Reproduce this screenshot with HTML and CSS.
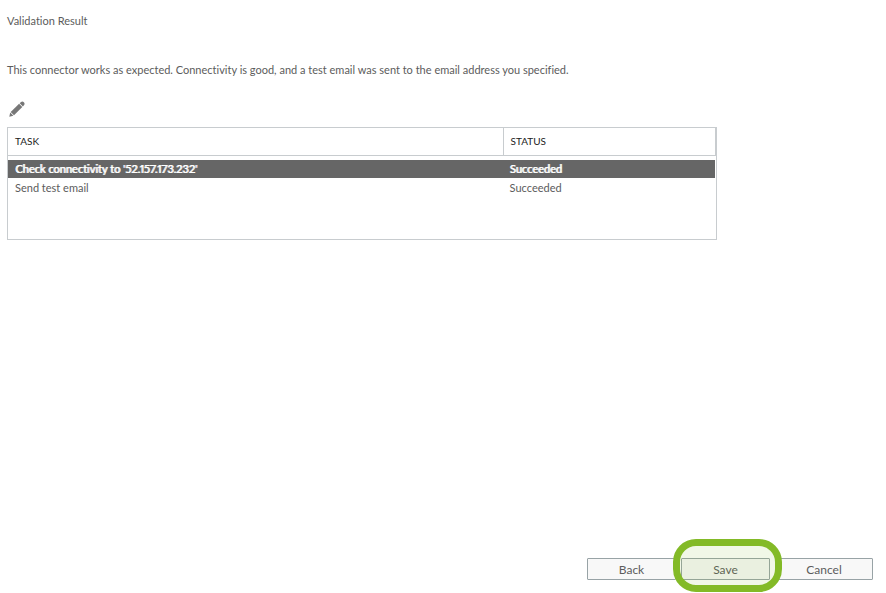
FILE: index.html
```html
<!DOCTYPE html>
<html lang="en">
<head>
    <meta charset="utf-8">
    <meta name="viewport" content="width=device-width, initial-scale=1.0">
    <title>Validation Result</title>
    <link rel="stylesheet" href="styles.css">
</head>
<body>

    <main class="content">
        <h1 class="title">Validation Result</h1>
        <p class="message">This connector works as expected. Connectivity is good, and a test email was sent to the email address you specified.</p>

        <button type="button" class="edit" aria-label="Edit">
            <svg width="16" height="16" viewBox="0 0 16 16" fill="#777">
                <path d="M0.3 15.7L1.2 11.6L4.4 14.8Z"/>
                <path d="M1.7 11L10.1 2.8L13.3 6L5 14.2Z"/>
                <path d="M10.7 2.2L12 1Q13.5 -0.1 14.9 1.2Q16.1 2.7 15.1 4.1L13.9 5.4Z"/>
            </svg>
        </button>

        <div class="grid">
            <table class="tasks">
                <thead>
                    <tr>
                        <th class="task">Task</th>
                        <th class="status">Status</th>
                    </tr>
                </thead>
                <tbody>
                    <tr class="spacer"><td colspan="2"></td></tr>
                    <tr class="selected">
                        <td>Check connectivity to '52.157.173.232'</td>
                        <td>Succeeded</td>
                    </tr>
                    <tr>
                        <td>Send test email</td>
                        <td>Succeeded</td>
                    </tr>
                </tbody>
            </table>
        </div>
    </main>

    <footer class="buttons">
        <button type="button" class="btn">Back</button>
        <div class="marked">
            <button type="button" class="btn">Save</button>
        </div>
        <button type="button" class="btn wide">Cancel</button>
    </footer>

</body>
</html>
```

FILE: styles.css
```css
* {
    box-sizing: border-box;
}

body {
    display: flex;
    flex-direction: column;
    min-height: 100vh;
    margin: 0;
    padding: 12px 13px 13px 7px;
    background: #fff;
    color: #5c5c5c;
    font-family: Lato, "Noto Sans", sans-serif;
    font-size: 11px;
    font-variant-ligatures: none;
    font-variant-numeric: proportional-nums;
    line-height: 18px;
}

.title {
    margin: 0 0 31px;
    font-size: 11px;
    font-weight: 400;
}

.message {
    margin: 0 0 22px;
}

.edit {
    display: block;
    margin: 0 0 10px 2px;
    padding: 0;
    border: 0;
    background: none;
    cursor: pointer;
}

.edit svg {
    display: block;
}

/* Task list */
.grid {
    max-width: 710px;
    min-height: 113px;
    border: 1px solid #c8cccf;
}

.tasks {
    width: 100%;
    border-collapse: separate;
    border-spacing: 0;
    table-layout: fixed;
}

.tasks th {
    height: 28px;
    padding: 0 7px 2px;
    border-right: 1px solid #c8cccf;
    border-bottom: 1px solid #c8cccf;
    color: #222;
    font-size: 10px;
    font-weight: 400;
    text-align: left;
    text-transform: uppercase;
}

.task {
    width: 70%;
}

.tasks td {
    height: 19px;
    padding: 0 7px;
    line-height: 18px;
}

.tasks td:last-child {
    padding-left: 6px;
    border-right: 1px solid #fff;
}

.tasks .spacer td {
    height: 4px;
    padding: 0;
}

.tasks .selected td {
    height: 18px;
    background: #666;
    color: #fff;
    text-shadow: 1px 0 #fff;
}

/* Footer buttons */
.buttons {
    display: flex;
    justify-content: flex-end;
    gap: 5px;
    margin-top: auto;
}

.btn {
    display: block;
    width: 89px;
    height: 22px;
    padding: 2px 0 0;
    border: 1px solid #98a3a6;
    border-radius: 1px;
    background: #f8f8f8;
    color: #5c5c5c;
    font-family: inherit;
    font-size: 12px;
    line-height: 18px;
    cursor: pointer;
}

.wide {
    width: 98px;
}

.marked {
    position: relative;
}

/* Green ring around the save button */
.marked::after {
    content: '';
    position: absolute;
    inset: -19px -12px -12px -8px;
    border: 7px solid #83ba27;
    border-radius: 23px;
    background: rgba(131, 186, 39, 0.11);
    pointer-events: none;
}
```
